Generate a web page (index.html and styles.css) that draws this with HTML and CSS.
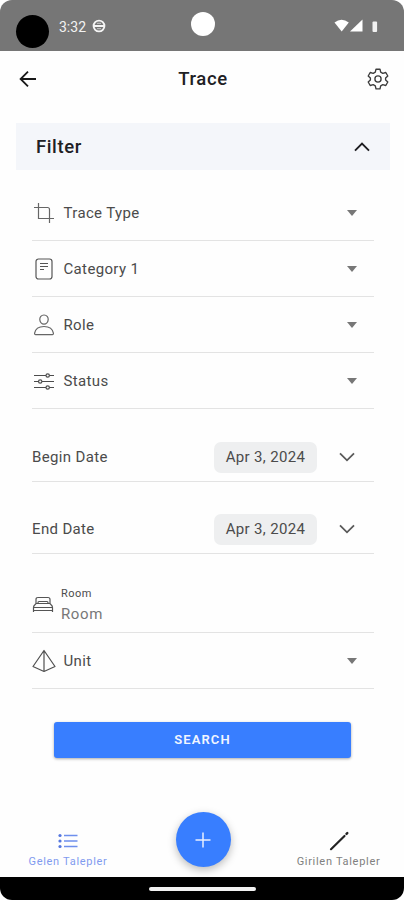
FILE: index.html
```html
<!DOCTYPE html>
<html lang="en">
<head>
<meta charset="utf-8">
<title>Trace</title>
<link rel="stylesheet" href="styles.css">
</head>
<body>
<div class="screen">
  <div class="status-bar">
    <span class="status-dot"></span>
    <span class="clock">3:32</span>
    <svg class="status-logo" width="14" height="14" viewBox="0 0 14 14"><circle cx="7" cy="7" r="5.4" fill="none" stroke="#f4f4f4" stroke-width="1.9"/><path d="M2 7h10" stroke="#f4f4f4" stroke-width="1.9"/><path d="M5 4.3h4M5 9.7h4" stroke="#ccc" stroke-width="1"/></svg>
    <span class="camera"></span>
    <svg class="signals" width="46" height="16" viewBox="0 0 46 16" fill="#fff"><path d="M0.5 4.5Q7.5-.8 14.8 4.5L7.7 13.5z"/><path d="M28.5 1.5v12H16z"/><rect x="38.500" y="3.500" width="4.600" height="10.500" rx="1" fill="#f1f1f1"/></svg>
  </div>
  <header class="header">
    <svg width="18" height="18" viewBox="0 0 18 18" fill="none" stroke="#181818" stroke-width="1.8"><path d="M17 9H2M9 1.6L1.6 9L9 16.4"/></svg>
    <h1>Trace</h1>
    <svg width="24" height="24" viewBox="0 0 24 24" fill="none" stroke="#3c3c3c" stroke-width="1.35" stroke-linejoin="round"><path d="M10 2.2h4l.7 3 2.1 1.2 3-.9 2 3.5-2.2 2.1v1.8l2.2 2.1-2 3.5-3-.9-2.1 1.2-.7 3h-4l-.7-3-2.1-1.2-3 .9-2-3.5 2.2-2.1v-1.8L2.200 9l2-3.500 3 .9 2.100-1.200z"/><circle cx="12" cy="12" r="3.100"/></svg>
  </header>
  <main class="content">
    <div class="filter">
      <h2>Filter</h2>
      <svg width="16" height="10" viewBox="0 0 16 10" fill="none" stroke="#1c1c20" stroke-width="1.900"><path d="M1 8.700L8 1.700l7 7"/></svg>
    </div>
    <div class="form">
      <div class="row">
        <svg class="icon" width="24" height="24" viewBox="0 0 24 24" fill="none" stroke="#666" stroke-width="1.200"><path d="M6.500 2v15.500H22M2 6.500h13.500q2 0 2 2V22"/></svg>
        <span class="label">Trace Type</span><i class="caret"></i>
      </div>
      <div class="row">
        <svg class="icon" width="24" height="24" viewBox="0 0 24 24" fill="none" stroke="#555" stroke-width="1.200"><rect x="4" y="2" width="16" height="20" rx="2.500"/><path d="M8 6.500h8M8 9.500h8M8 12.500h4"/></svg>
        <span class="label">Category 1</span><i class="caret"></i>
      </div>
      <div class="row">
        <svg class="icon" width="24" height="24" viewBox="0 0 24 24" fill="none" stroke="#666" stroke-width="1.200"><path d="M12 2c-2.700 0-4.400 2-4.200 4.600.2 2.500 2 4.600 4.200 4.600s4-2.100 4.200-4.600C16.400 4 14.700 2 12 2zM12 13.500c-4.600 0-8.600 2.300-9.400 6.700-.1.900.3 1.500 1 1.500h16.800c.7 0 1.100-.6 1-1.500-.8-4.400-4.800-6.700-9.400-6.700z"/></svg>
        <span class="label">Role</span><i class="caret"></i>
      </div>
      <div class="row">
        <svg class="icon" width="24" height="24" viewBox="0 0 24 24" fill="none" stroke="#4c4c4c" stroke-width="1.200"><path d="M2 6.500h12M17.500 6.500H22M2 12.500h4.500M10 12.500h12M2 18.500h12M17.500 18.500H22"/><circle cx="15.700" cy="6.500" r="1.700"/><circle cx="8.200" cy="12.500" r="1.700"/><circle cx="15.700" cy="18.500" r="1.700"/></svg>
        <span class="label">Status</span><i class="caret"></i>
      </div>
      <div class="row date">
        <span class="label">Begin Date</span><span class="chip">Apr 3, 2024</span>
        <svg class="chevron" width="16" height="10" viewBox="0 0 16 10" fill="none" stroke="#5a5a5a" stroke-width="1.800"><path d="M1 1.300l7 7 7-7"/></svg>
      </div>
      <div class="row date second">
        <span class="label">End Date</span><span class="chip">Apr 3, 2024</span>
        <svg class="chevron" width="16" height="10" viewBox="0 0 16 10" fill="none" stroke="#5a5a5a" stroke-width="1.800"><path d="M1 1.300l7 7 7-7"/></svg>
      </div>
      <div class="row room">
        <svg class="icon" width="24" height="24" viewBox="0 0 24 24" fill="none" stroke="#555" stroke-width="1.200"><path d="M5 10.500V6.500q0-2 2-2h10q2 0 2 2v4M7 10.500v-1q0-1 1-1h8q1 0 1 1v1M2.500 19v-4.500q0-1.500 1.200-2.500l1.300-1.500h14l1.300 1.500q1.200 1 1.200 2.500V19M2.500 14.500h19M2.500 17.500h19"/></svg>
        <div class="field"><span class="field-label">Room</span><span class="placeholder">Room</span></div>
      </div>
      <div class="row">
        <svg class="icon" width="24" height="24" viewBox="0 0 24 24" fill="none" stroke="#505050" stroke-width="1.200" stroke-linejoin="round"><path d="M12 1.500L1 17.500l11 5 11-5zM12 1.500v21"/></svg>
        <span class="label">Unit</span><i class="caret"></i>
      </div>
    </div>
    <button class="search">SEARCH</button>
  </main>
  <nav class="tabs">
    <div class="tab active">
      <svg width="20" height="16" viewBox="0 0 20 16" stroke="#6e8fed" fill="#5577df"><path d="M6 2.500h13.500M6 8h13.500M6 13.500h13.500" stroke-width="1.700"/><g stroke="none"><circle cx="2" cy="2.500" r="1.600"/><circle cx="2" cy="8" r="1.600"/><circle cx="2" cy="13.500" r="1.600"/></g></svg>
      <span>Gelen Talepler</span>
    </div>
    <button class="fab" aria-label="Add"><svg width="16" height="16" viewBox="0 0 16 16" stroke="#e9f0ff" stroke-width="1.500"><path d="M8 .5v15M.5 8h15"/></svg></button>
    <div class="tab">
      <svg width="20" height="20" viewBox="0 0 20 20" stroke="#242424" stroke-linecap="round"><path d="M2 18.200L15.500 5" stroke-width="2.200"/><path d="M17.500 2.900l.8-.8" stroke-width="2.400"/></svg>
      <span>Girilen Talepler</span>
    </div>
  </nav>
  <div class="nav-bar"><span></span></div>
</div>
</body>
</html>
```
FILE: styles.css
```css
* { box-sizing: border-box; }
body { margin: 0; background: #fff; font-family: Roboto, "Liberation Sans", sans-serif; color: #4b4b4b; }
.screen { width: 404px; height: 900px; display: flex; flex-direction: column; overflow: hidden; border-radius: 12px; background: #fefefe; }
svg { display: block; flex: none; }
button { border: 0; padding: 0; font-family: inherit; }
h1, h2 { margin: 0; font-weight: 500; color: #202024; }

.status-bar { position: relative; height: 51px; flex: none; background: #767676; display: flex; align-items: center; padding-left: 16px; }
.status-dot { width: 33px; height: 33px; border-radius: 50%; background: #000; margin-top: 12px; }
.clock { margin: 3px 0 0 10px; font-size: 14px; color: #f2f2f2; }
.status-logo { margin: 1px 0 0 6px; }
.camera { position: absolute; left: 191px; top: 12px; width: 24px; height: 24px; border-radius: 50%; background: #fff; }
.signals { margin: 1px 24px 0 auto; }

.header { height: 71px; flex: none; padding: 16px 14px 0 19px; display: grid; grid-template-columns: 60px 1fr 60px; align-items: start; }
.header > svg:first-child { margin-top: 3px; }
.header > svg:last-child { justify-self: end; }
h1 { text-align: center; font-size: 18.5px; line-height: 24px; letter-spacing: .6px; padding-right: 3px; }

.content { flex: none; padding: 0 14px 0 16px; }
.filter { height: 47px; margin-top: 1px; padding: 0 20px; background: #f4f6fa; display: flex; align-items: center; justify-content: space-between; }
h2 { font-size: 18.5px; letter-spacing: .6px; }
.form { margin: 15px 16px 0 16px; }
.row { height: 56px; border-bottom: 1px solid #e3e3e3; display: flex; align-items: center; }
.icon { margin-right: 7.5px; }
.label { font-size: 15px; letter-spacing: .35px; }
.caret { margin: 0 17px 0 auto; border: 5px solid transparent; border-top: 6px solid #777; border-bottom: 0; }
.date { height: 73px; padding-top: 24px; }
.second { height: 72px; padding-top: 23px; }
.chip { margin-left: auto; width: 103px; height: 31px; border-radius: 7px; background: #eeeff0; font-size: 15px; line-height: 31px; text-align: center; letter-spacing: .35px; }
.chevron { margin: 0 19px 0 22px; }
.room { height: 79px; padding-top: 22px; }
.room .icon { margin: 1px 6px 0 -1px; }
.field { display: flex; flex-direction: column; padding-top: 4px; }
.field-label { font-size: 11px; line-height: 15px; letter-spacing: .5px; }
.placeholder { font-size: 15px; line-height: 26px; letter-spacing: .6px; color: #777; }
.search { display: block; width: 297px; height: 36px; margin: 33px 0 0 38px; padding-bottom: 2px; border-radius: 3px; background: #387eff; color: #f2f6ff; font-size: 13px; font-weight: 600; letter-spacing: 1.1px; box-shadow: 0 1px 3px #0005; }

.tabs { margin-top: auto; height: 66px; flex: none; padding: 0 23px 0 28px; display: flex; justify-content: space-between; }
.tab { width: 85px; display: flex; flex-direction: column; align-items: center; justify-content: flex-end; padding-bottom: 8px; font-size: 11px; line-height: 15px; letter-spacing: .7px; white-space: nowrap; color: #808080; }
.tab svg { margin-bottom: 3px; }
.active { width: 80px; color: #819bef; }
.active svg { margin-bottom: 5px; }
.fab { width: 55px; height: 55px; margin: 1px 0 0 2px; border-radius: 50%; background: #387eff; display: grid; place-items: center; box-shadow: 0 3px 8px #0004; }
.nav-bar { height: 23px; flex: none; background: #000; display: flex; justify-content: center; align-items: center; }
.nav-bar span { width: 107px; height: 4px; border-radius: 2px; background: #f2f2f2; }
```
